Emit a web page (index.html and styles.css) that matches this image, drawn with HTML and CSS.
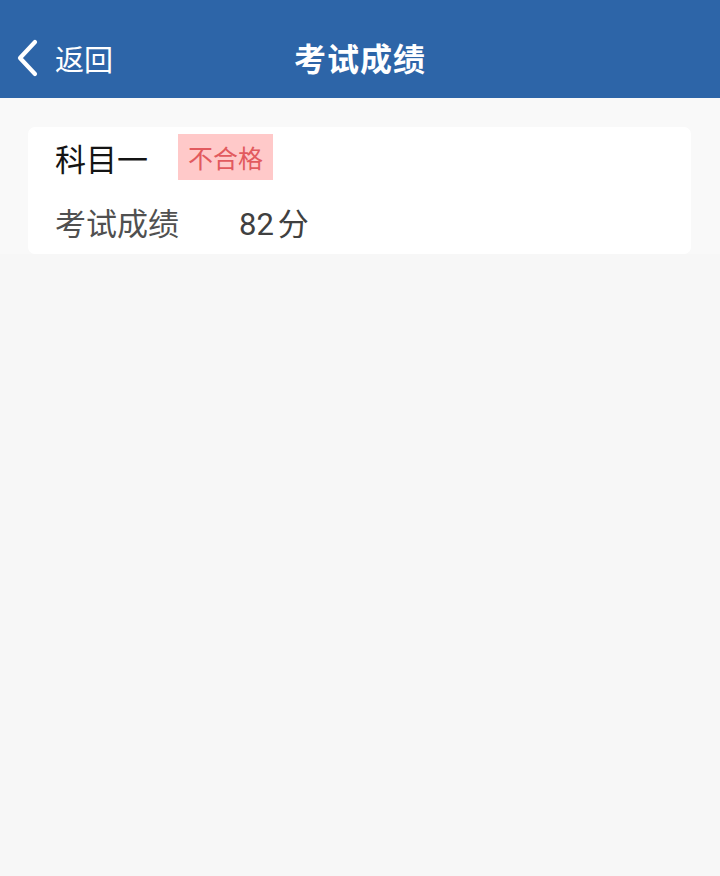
FILE: index.html
```html
<!DOCTYPE html>
<html lang="zh">
<head>
<meta charset="utf-8">
<link rel="stylesheet" href="styles.css">
</head>
<body>
<header class="nav">
  <div class="back">
    <svg class="chev" width="24" height="38" viewBox="0 0 24 38"><path d="M21 3 L6 19 L21 35" fill="none" stroke="#fff" stroke-width="4.2" stroke-linecap="round" stroke-linejoin="round"/></svg>
    <span class="back-text">返回</span>
  </div>
  <h1 class="title">考试成绩</h1>
</header>
<main class="content">
  <section class="card">
    <div class="row row-subject">
      <span class="subject">科目一</span>
      <span class="badge">不合格</span>
    </div>
    <div class="row row-score">
      <span class="label">考试成绩</span>
      <span class="score"><span class="num">82</span>分</span>
    </div>
  </section>
</main>
</body>
</html>
```
FILE: styles.css
```css
* { box-sizing: border-box; }
html, body { margin: 0; padding: 0; }
body {
  width: 720px;
  height: 876px;
  background: #f7f7f7;
  font-family: "Noto Sans CJK SC", "Noto Sans", sans-serif;
  overflow: hidden;
}
.nav {
  position: relative;
  height: 98px;
  background: #2d65a8;
  display: flex;
  align-items: center;
  justify-content: center;
}
.back {
  position: absolute;
  left: 14px;
  top: 39px;
  display: flex;
  align-items: center;
  gap: 17px;
}
.chev { display: block; }
.back-text {
  color: #fff;
  font-size: 29px;
  line-height: 38px;
}
.title {
  margin: 0;
  margin-top: 16px;
  color: #fff;
  font-size: 32px;
  font-weight: 700;
  letter-spacing: 1px;
}
.content {
  padding: 29px 28px 0 28px;
  background: #f9f9f9;
}
.card {
  width: 663px;
  height: 127px;
  background: #fff;
  border-radius: 7px;
  padding: 7px 27px 0 27px;
}
.row { display: flex; align-items: center; }
.row-subject { height: 46px; }
.subject {
  font-size: 31px;
  color: #141414;
  width: 123px;
}
.badge {
  background: #ffc9c9;
  color: #e25a5e;
  font-size: 25px;
  height: 46px;
  line-height: 46px;
  padding: 0 10px;
}
.row-score { height: 62px; margin-top: 10px; }
.label {
  font-size: 31px;
  color: #505050;
  width: 184px;
}
.score {
  font-size: 31px;
  color: #404040;
}
.num {
  font-family: Roboto, "Noto Sans", sans-serif;
  margin-right: 4px;
}
```
